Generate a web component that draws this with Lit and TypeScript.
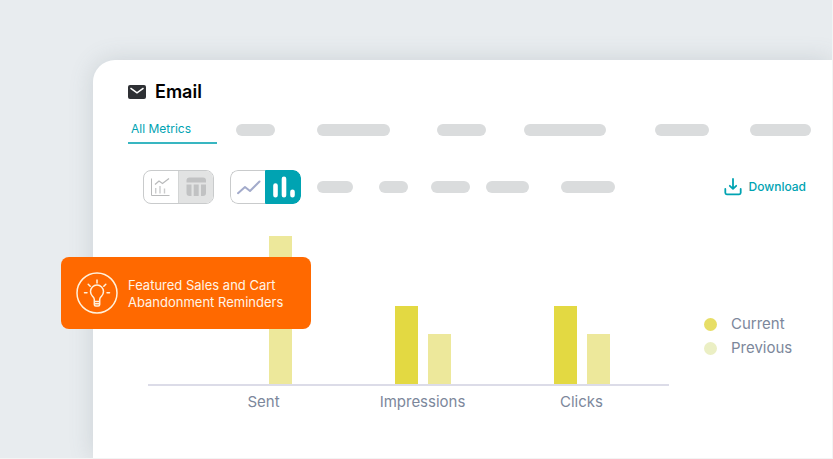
import { LitElement, html, svg, css } from "lit";
import { customElement, property, state } from "lit/decorators.js";
import { styleMap } from "lit/directives/style-map.js";

interface Metric {
  label: string;
  current: number;
  previous: number;
}

const METRICS: Metric[] = [
  { label: "Sent", current: 0, previous: 100 },
  { label: "Impressions", current: 53, previous: 34 },
  { label: "Clicks", current: 53, previous: 34 },
];

@customElement("metric-chart")
export class MetricChart extends LitElement {
  @property({ attribute: false }) metrics: Metric[] = [];

  static styles = css`
    :host {
      display: block;
    }
    .plot,
    .labels {
      display: grid;
      grid-template-columns: repeat(3, 1fr);
      padding: 0 8px 0 36px;
    }
    .plot {
      height: 148px;
      border-bottom: 2px solid #dcdce8;
    }
    .group {
      display: flex;
      justify-content: center;
      align-items: flex-end;
      gap: 10px;
      height: 148px;
    }
    .bar {
      width: 23px;
    }
    .current {
      background: #e3d942;
    }
    .previous {
      background: #ede89b;
    }
    .labels {
      padding-top: 4px;
      font-size: 15px;
      line-height: 24px;
      color: #7c879b;
      text-align: center;
    }
  `;

  render() {
    return html`
      <div class="plot">
        ${this.metrics.map(
          (m) => html`<div class="group">
            <div class="bar current" style=${styleMap({ height: `${m.current}%` })}></div>
            <div class="bar previous" style=${styleMap({ height: `${m.previous}%` })}></div>
          </div>`
        )}
      </div>
      <div class="labels">${this.metrics.map((m) => html`<span>${m.label}</span>`)}</div>
    `;
  }
}

const mailIcon = svg`<svg class="mail" viewBox="0 0 18 14" aria-hidden="true">
  <rect width="18" height="14" rx="2" fill="#2e3034"/>
  <path d="M2.500 3.200 9 7.800l6.500-4.600" fill="none" stroke="#fff" stroke-width="1.600"/>
</svg>`;

const comboIcon = svg`<svg class="glyph" viewBox="0 0 34 32" aria-hidden="true" fill="none" stroke="#b9babb">
  <path d="M7.500 7.500v17h18" stroke-width="1"/>
  <path d="M11.700 22.500v-5.500M16 22.500v-7.500M20.500 22.500v-5" stroke-width="1.400" stroke="#cbcccd"/>
  <path d="M11 13.500l4-3.500 3.500 2.500 6.500-5" stroke-width="1.300"/>
</svg>`;

const tableIcon = svg`<svg class="glyph" viewBox="0 0 34 32" aria-hidden="true" fill="#c1c2c3">
  <path d="M10.500 6.500h13.500a3 3 0 0 1 3 3v2h-19.500v-2a3 3 0 0 1 3-3z"/>
  <path d="M7.500 13.500h5v11.500h-2a3 3 0 0 1-3-3zM14.700 13.500h5v11.500h-5zM22 13.500h5v8.500a3 3 0 0 1-3 3h-2z"/>
</svg>`;

const lineIcon = svg`<svg class="glyph" viewBox="0 0 34 32" aria-hidden="true" fill="none" stroke="#a3abcb" stroke-width="2" stroke-linecap="round" stroke-linejoin="round">
  <path d="M7 22.200l7-6.200 5 4 9.500-9.500"/>
</svg>`;

const barsIcon = svg`<svg class="glyph" viewBox="0 0 34 32" aria-hidden="true" stroke="#fff" stroke-width="4.600" stroke-linecap="round">
  <path d="M9.500 14.500v9.700M18 7.700v16.500M26.500 20.700v3.500"/>
</svg>`;

const downloadIcon = svg`<svg class="download-icon" viewBox="0 0 18 18" aria-hidden="true" fill="none" stroke="#00a3b2" stroke-width="1.800" stroke-linecap="round" stroke-linejoin="round">
  <path d="M9 1v9.500M5.800 7.800l3.200 3 3.200-3M1.300 11v3.800a1.500 1.500 0 0 0 1.500 1.500h12.400a1.500 1.500 0 0 0 1.500-1.500V11"/>
</svg>`;

const bulbIcon = svg`<svg class="bulb" viewBox="0 0 42 42" aria-hidden="true" fill="none" stroke="#fff1dc" stroke-width="1.500" stroke-linecap="round" stroke-linejoin="round">
  <circle cx="21" cy="21" r="20"/>
  <path d="M18.300 29.500v-2c0-1.500-.8-2.200-1.800-3.300a6.500 6.500 0 1 1 9 0c-1 1.100-1.800 1.800-1.800 3.300v2zM18.300 29.500v3q0 1.500 1.500 1.500h2.400q1.500 0 1.500-1.500v-3M18.500 31.700h5"/>
  <path d="M21 8v3M12.200 12.200l2 2M29.800 12.200l-2 2M8.500 20.800h2.500M31 20.800h2.500"/>
</svg>`;

@customElement("app-root")
export class AppRoot extends LitElement {
  @state() private view = "chart";
  @state() private shape = "bars";

  static styles = css`
    :host {
      display: flex;
      box-sizing: border-box;
      min-height: 100vh;
      padding: 60px 0 0 93px;
      overflow: hidden;
      border: solid #f3f4f4;
      border-width: 0 1px 1px 0;
      background: #e8ecef;
      font-family: Inter, "Liberation Sans", sans-serif;
    }
    button {
      margin: 0;
      padding: 0;
      border: 0;
      background: none;
      font: inherit;
      cursor: pointer;
    }
    svg {
      display: block;
      flex: none;
    }
    .card {
      position: relative;
      flex: 1;
      box-sizing: border-box;
      padding: 20px 21px 20px 35px;
      border-radius: 22px 0 0 0;
      background: #fff;
      box-shadow: 0 0 24px rgba(90, 105, 115, 0.2);
    }
    .title {
      display: flex;
      align-items: center;
      gap: 9px;
    }
    .title h1 {
      margin: 0;
      font-size: 18px;
      line-height: 24px;
      font-weight: 600;
      color: #000;
    }
    .mail {
      width: 18px;
      height: 14px;
    }
    .tabs {
      display: grid;
      grid-template-columns: 108fr 81fr 120fr 87fr 131fr 95fr 61fr;
      align-items: center;
      margin-top: 12px;
    }
    .tab {
      justify-self: start;
      box-sizing: border-box;
      width: 89px;
      height: 28px;
      padding: 0 0 0 3px;
      border-bottom: 2px solid #38b6c1;
      font-size: 12px;
      line-height: 26px;
      text-align: left;
      color: #00a3b2;
    }
    .pill {
      height: 12px;
      border-radius: 6px;
      background: #dadcdd;
    }
    .w29 { width: 29px; }
    .w36 { width: 36px; }
    .w39 { width: 39px; }
    .w43 { width: 43px; }
    .w49 { width: 49px; }
    .w54 { width: 54px; }
    .w61 { width: 61px; }
    .w73 { width: 73px; }
    .w82 { width: 82px; }
    .toolbar {
      display: flex;
      align-items: center;
      justify-content: space-between;
      margin-top: 26px;
      padding: 0 5px 0 15px;
    }
    .tools {
      display: flex;
      align-items: center;
      gap: 16px;
    }
    .filters {
      display: grid;
      grid-template-columns: 62px 52px 55px 75px 54px;
    }
    .toggle {
      display: flex;
      box-sizing: border-box;
      width: 71px;
      height: 34px;
      border: 1px solid #c9cbcc;
      border-radius: 8px;
      overflow: hidden;
    }
    .toggle button {
      flex: 1;
    }
    .toggle button + button {
      border-left: 1px solid #d3d5d5;
    }
    .toggle .muted {
      background: #e2e3e3;
    }
    .toggle.active {
      border: 0;
    }
    .toggle.active button {
      box-sizing: border-box;
      border: 1px solid #c9cbcc;
    }
    .toggle.active button:first-child {
      border-right: 0;
      border-radius: 8px 0 0 8px;
    }
    .toggle.active button:last-child {
      border-radius: 0 8px 8px 0;
    }
    .toggle.active button.on {
      border-color: #00a3b2;
      background: #00a3b2;
    }
    .glyph {
      width: 34px;
      height: 32px;
    }
    .download {
      display: flex;
      align-items: center;
      gap: 7px;
      font-size: 12px;
      line-height: 20px;
      font-weight: 500;
      color: #00a3b2;
    }
    .download-icon {
      width: 18px;
      height: 18px;
    }
    .report {
      display: flex;
      align-items: center;
      justify-content: space-between;
      gap: 35px;
      margin-top: 32px;
      padding: 0 20px;
    }
    metric-chart {
      flex: 1;
    }
    .legend {
      width: 87px;
      margin: 22px 0 0;
      padding: 0;
      list-style: none;
      font-size: 15px;
      line-height: 24px;
      color: #7c879b;
    }
    .legend li {
      display: flex;
      align-items: center;
      gap: 14px;
    }
    .dot {
      flex: none;
      width: 13px;
      height: 13px;
      border-radius: 50%;
    }
    .dot.current { background: #e7de66; }
    .dot.previous { background: #ebefc4; }
    .tip {
      position: absolute;
      top: 197px;
      left: -32px;
      display: flex;
      align-items: center;
      gap: 10px;
      box-sizing: border-box;
      width: 250px;
      height: 72px;
      padding-left: 15px;
      border-radius: 8px;
      background: #ff6900;
      color: #fff4e6;
      font-size: 13px;
      line-height: 17px;
    }
    .tip p {
      margin: 2px 0 0;
    }
    .bulb {
      width: 42px;
      height: 42px;
    }
  `;

  render() {
    return html`
      <main class="card">
        <header class="title">${mailIcon}<h1>Email</h1></header>

        <nav class="tabs" aria-label="Metrics">
          <button class="tab" aria-current="page">All Metrics</button>
          <span class="pill w39"></span>
          <span class="pill w73"></span>
          <span class="pill w49"></span>
          <span class="pill w82"></span>
          <span class="pill w54"></span>
          <span class="pill w61"></span>
        </nav>

        <div class="toolbar">
          <div class="tools">
            <div class="toggle" role="group" aria-label="View">
              <button aria-label="Chart" aria-pressed=${this.view === "chart"} @click=${() => (this.view = "chart")}>${comboIcon}</button>
              <button class="muted" aria-label="Table" aria-pressed=${this.view === "table"} @click=${() => (this.view = "table")}>${tableIcon}</button>
            </div>
            <div class="toggle active" role="group" aria-label="Chart type">
              <button class=${this.shape === "line" ? "on" : ""} aria-label="Line" aria-pressed=${this.shape === "line"} @click=${() => (this.shape = "line")}>${lineIcon}</button>
              <button class=${this.shape === "bars" ? "on" : ""} aria-label="Bars" aria-pressed=${this.shape === "bars"} @click=${() => (this.shape = "bars")}>${barsIcon}</button>
            </div>
            <div class="filters">
              <span class="pill w36"></span>
              <span class="pill w29"></span>
              <span class="pill w39"></span>
              <span class="pill w43"></span>
              <span class="pill w54"></span>
            </div>
          </div>
          <button class="download">${downloadIcon}Download</button>
        </div>

        <section class="report">
          <metric-chart .metrics=${METRICS}></metric-chart>
          <ul class="legend">
            <li><span class="dot current"></span>Current</li>
            <li><span class="dot previous"></span>Previous</li>
          </ul>
        </section>

        <aside class="tip">
          ${bulbIcon}
          <p>Featured Sales and Cart<br />Abandonment Reminders</p>
        </aside>
      </main>
    `;
  }
}
